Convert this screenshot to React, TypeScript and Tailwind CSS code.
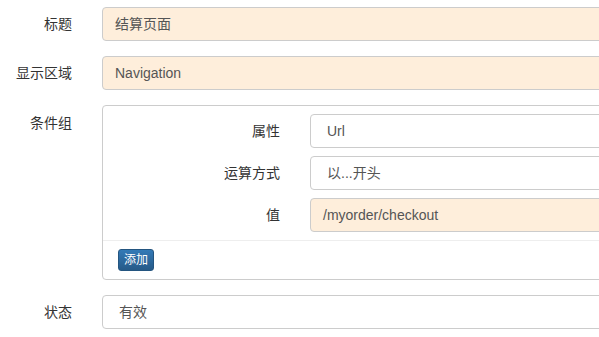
const font = "font-['Liberation_Sans','Noto_Sans_CJK_SC',sans-serif]";

function Field({ value, peach, select }: { value: string; peach?: boolean; select?: boolean }) {
  return (
    <div
      className={`flex h-[34px] w-[560px] shrink-0 items-center rounded-[4px] border border-[#ccc] text-[14px] text-[#555] ${
        peach ? "bg-[#feeedb]" : "bg-white"
      } ${select ? "pl-4" : "pl-3"}`}
    >
      {value}
    </div>
  );
}

function Row({ label, children, top }: { label: string; children: React.ReactNode; top?: boolean }) {
  return (
    <div className={`flex gap-[30px] ${top ? "items-start" : "items-center"}`}>
      <div className={`w-[72px] shrink-0 text-right text-[14px] text-[#333] ${top ? "pt-[8px]" : ""}`}>{label}</div>
      {children}
    </div>
  );
}

const conditions = [
  { label: "属性", value: "Url", select: true },
  { label: "运算方式", value: "以...开头", select: true },
  { label: "值", value: "/myorder/checkout", peach: true },
];

export default function App() {
  return (
    <div className={`h-[337px] w-[599px] overflow-hidden bg-white pt-[7px] ${font}`}>
      <div className="flex flex-col gap-[15px]">
        <Row label="标题">
          <Field value="结算页面" peach />
        </Row>
        <Row label="显示区域">
          <Field value="Navigation" peach />
        </Row>
        <Row label="条件组" top>
          <div className="w-[560px] shrink-0 rounded-[4px] border border-[#ccc]">
            <div className="flex flex-col gap-[8px] pb-[8px] pt-[8px]">
              {conditions.map((c) => (
                <div key={c.label} className="flex items-center gap-[30px]">
                  <div className="w-[177px] shrink-0 text-right text-[14px] text-[#333]">{c.label}</div>
                  <Field value={c.value} peach={c.peach} select={c.select} />
                </div>
              ))}
            </div>
            <div className="border-t border-[#eee] px-[15px] pb-[8px] pt-[8px]">
              <button className="flex h-[22px] w-[36px] items-center justify-center rounded-[3px] border border-[#245580] bg-gradient-to-b from-[#337ab7] to-[#265a88] text-[12px] text-white">
                添加
              </button>
            </div>
          </div>
        </Row>
        <Row label="状态">
          <Field value="有效" select />
        </Row>
      </div>
    </div>
  );
}
